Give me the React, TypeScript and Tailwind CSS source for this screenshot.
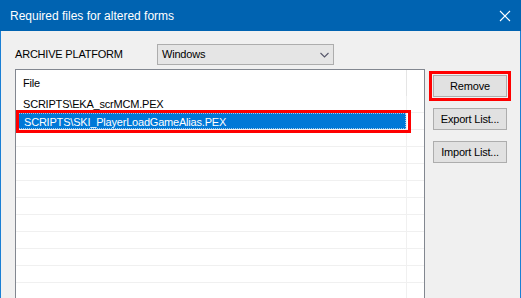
import React from "react";

const font = { fontFamily: '"Liberation Sans", Arial, sans-serif' };

function Row({ children, selected }: { children?: React.ReactNode; selected?: boolean }) {
  return (
    <div className="flex h-[17px] border-b border-[#f0f0f0] shrink-0">
      <div
        className={
          selected
            ? "w-[390px] h-[16px] bg-[#0078d7] text-white pl-[7px] leading-[16px] border border-dotted border-[#9cc8ee]"
            : "w-[390px] h-[16px] pl-[7px] leading-[16px] text-black"
        }
      >
        {children}
      </div>
      <div className="w-px bg-[#f0f0f0]" />
      <div className="flex-1" />
    </div>
  );
}

export default function App() {
  const empty = Array.from({ length: 14 });
  return (
    <div
      className="w-[521px] h-[298px] overflow-hidden flex flex-col bg-[#f0f0f0] text-[11px] tracking-[-0.2px]"
      style={font}
    >
      {/* Title bar */}
      <div className="h-[31px] bg-[#0063b1] flex items-center justify-between pl-[10px] pr-[10px] shrink-0">
        <span className="text-white text-[12px] tracking-normal leading-none">Required files for altered forms</span>
        <svg width="12" height="12" viewBox="0 0 12 12">
          <path d="M1 1 L11 11 M11 1 L1 11" stroke="white" strokeWidth="1.1" />
        </svg>
      </div>

      {/* Body */}
      <div className="h-[300px] shrink-0 flex flex-col border-x border-[#1a7fd4] pl-[14px] pt-[13px]">
        <div className="flex items-center h-[21px]">
          <div className="w-[142px] text-black leading-none">ARCHIVE PLATFORM</div>
          <div className="w-[177px] h-[21px] bg-[#e5e5e5] border border-[#adadad] flex items-center justify-between pl-[4px] pr-[3px]">
            <span className="text-black leading-none">Windows</span>
            <svg width="9" height="6" viewBox="0 0 9 6" className="mr-[1px]">
              <path d="M0.5 1 L4.5 5 L8.5 1" stroke="#56566a" strokeWidth="1.1" fill="none" />
            </svg>
          </div>
        </div>

        <div className="flex mt-[4px]">
          {/* List view */}
          <div className="relative w-[410px] h-[260px] border border-[#828790] bg-white flex flex-col overflow-hidden">
            <div className="flex h-[26px] shrink-0">
              <div className="w-[390px] pl-[7px] pt-[8px] leading-none text-black">File</div>
              <div className="w-px bg-[#e5e5e5]" />
              <div className="flex-1" />
            </div>
            <Row>SCRIPTS\EKA_scrMCM.PEX</Row>
            <Row selected>SCRIPTS\SKI_PlayerLoadGameAlias.PEX</Row>
            {empty.map((_, i) => (
              <Row key={i} />
            ))}
            <div className="absolute top-[40px] left-0 w-[395px] h-[23px] border-[3px] border-[#ff0000]" />
          </div>

          {/* Buttons */}
          <div className="flex flex-col gap-[11px] ml-[8px] mt-[6px]">
            <button className="w-[74px] h-[22px] bg-[#e1e1e1] border border-[#adadad] text-black leading-none outline-[3px] outline-solid outline-[#ff0000] outline-offset-[1px]">
              Remove
            </button>
            <button className="w-[74px] h-[22px] bg-[#e1e1e1] border border-[#adadad] text-black leading-none">
              Export List...
            </button>
            <button className="w-[74px] h-[22px] bg-[#e1e1e1] border border-[#adadad] text-black leading-none">
              Import List...
            </button>
          </div>
        </div>
      </div>
    </div>
  );
}
